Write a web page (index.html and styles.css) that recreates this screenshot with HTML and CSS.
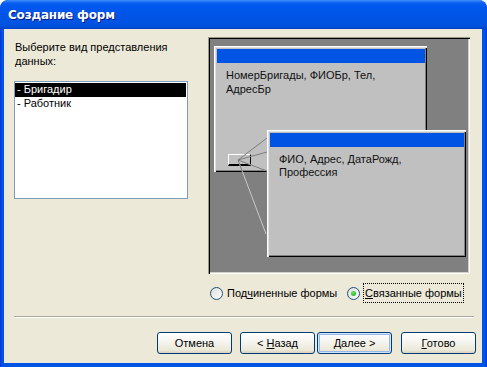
FILE: index.html
```html
<!DOCTYPE html>
<html lang="ru">
<head>
    <meta charset="UTF-8">
    <title>Создание форм</title>
    <link rel="stylesheet" href="styles.css">
</head>
<body>
    <div class="window">
        <div class="titlebar">
            <span class="title">Создание форм</span>
        </div>
        <div class="client">
            <div class="main">
                <div class="left">
                    <p class="prompt">Выберите вид представления<br>данных:</p>
                    <ul class="list">
                        <li class="selected">- Бригадир</li>
                        <li>- Работник</li>
                    </ul>
                </div>
                <div class="right">
                    <div class="preview">
                        <div class="form form-main">
                            <div class="caption"></div>
                            <p class="fields">НомерБригады, ФИОБр, Тел,<br>АдресБр</p>
                            <span class="subbtn"></span>
                        </div>
                        <svg class="links" width="262" height="237" viewBox="0 0 262 237">
                            <defs>
                                <clipPath id="inMain"><rect x="6" y="9" width="213" height="126"/></clipPath>
                            </defs>
                            <g stroke="#c8c8c8" stroke-width="1">
                                <line x1="30" y1="123" x2="59" y2="101"/>
                                <line x1="30" y1="123" x2="59" y2="115"/>
                                <line x1="30" y1="123" x2="59" y2="134"/>
                                <line x1="30" y1="123" x2="58" y2="197"/>
                            </g>
                            <g stroke="#7c7c7c" stroke-width="1" clip-path="url(#inMain)">
                                <line x1="30" y1="123" x2="59" y2="101"/>
                                <line x1="30" y1="123" x2="59" y2="115"/>
                                <line x1="30" y1="123" x2="59" y2="134"/>
                                <line x1="30" y1="123" x2="58" y2="197"/>
                            </g>
                        </svg>
                        <div class="form form-sub">
                            <div class="caption"></div>
                            <p class="fields">ФИО, Адрес, ДатаРожд,<br>Профессия</p>
                        </div>
                    </div>
                    <div class="options">
                        <label class="radio first"><span class="dot"></span>Под<u>ч</u>иненные формы</label>
                        <label class="radio checked"><span class="dot"></span><span class="focus"><u>С</u>вязанные формы</span></label>
                    </div>
                </div>
            </div>
            <div class="separator"></div>
            <div class="buttons">
                <button class="btn">Отмена</button>
                <button class="btn back">&lt; <u>Н</u>азад</button>
                <button class="btn default"><u>Д</u>алее &gt;</button>
                <button class="btn"><u>Г</u>отово</button>
            </div>
        </div>
    </div>
</body>
</html>
```

FILE: styles.css
```css
html, body {
    margin: 0;
    padding: 0;
    background: #ffffff;
}

body {
    font-family: "Liberation Sans", Arial, sans-serif;
    font-size: 11px;
    color: #000;
}

.window {
    width: 487px;
    height: 367px;
    box-sizing: border-box;
    display: flex;
    flex-direction: column;
    border-radius: 8px 8px 0 0;
    background: linear-gradient(to right, #0831d9 0, #0054e3 2px, #0054e3 calc(100% - 2px), #0831d9 100%);
    padding: 0 5px 4px 4px;
    overflow: hidden;
}

.titlebar {
    height: 29px;
    margin: 0 -5px 0 -4px;
    padding-left: 8px;
    display: flex;
    align-items: center;
    border-radius: 8px 8px 0 0;
    background: linear-gradient(#3d8dfa 0, #0a5ff0 3px, #0058ee 6px, #0055e8 14px, #0054e3 22px, #0250da 27px, #003dbf 29px);
}

.title {
    color: #fff;
    font-family: "DejaVu Sans", sans-serif;
    font-weight: bold;
    font-size: 12px;
    letter-spacing: -0.2px;
    text-shadow: 1px 1px 0 #0a1883;
    margin-top: 1px;
}

.client {
    flex: 1;
    background: #ece9d8;
    padding: 8px 8px 0 10px;
    display: flex;
    flex-direction: column;
}

.main {
    display: flex;
    gap: 20px;
}

.left {
    width: 174px;
}

.prompt {
    margin: 3px 0 0 1px;
    line-height: 14px;
}

.list {
    list-style: none;
    margin: 13px 0 0 0;
    padding: 1px 1px 1px 0;
    height: 114px;
    border: 1px solid #7f9db9;
    background: #fff;
}

.list li {
    height: 14px;
    line-height: 13px;
    padding-left: 2px;
}

.list li.selected {
    background: #000;
    color: #fff;
}

.right {
    width: 262px;
}

.preview {
    position: relative;
    height: 237px;
    background: #808080;
    box-shadow: inset 1px 1px 0 #9d9a8c, inset 2px 2px 0 #000, inset -1px -1px 0 #fff, inset -2px -2px 0 #d4d0c8;
}

.form {
    position: absolute;
    box-sizing: border-box;
    background: #c0c0c0;
    padding: 3px 2px 0 3px;
    box-shadow: inset 1px 1px 0 #fff, inset 2px 2px 0 #dfdfdf, inset -1px -1px 0 #000, inset -2px -2px 0 #808080;
}

.form-main {
    left: 6px;
    top: 9px;
    width: 213px;
    height: 126px;
}

.form-sub {
    left: 59px;
    top: 93px;
    width: 199px;
    height: 127px;
}

.caption {
    height: 14px;
    background: #0054e3;
}

.fields {
    margin: 5px 0 0 9px;
    line-height: 14px;
    color: #111;
}

.form-sub .fields {
    margin-top: 6px;
    line-height: 13px;
}

.subbtn {
    position: absolute;
    left: 14px;
    top: 108px;
    width: 23px;
    height: 12px;
    box-sizing: border-box;
    border-top: 1px solid #fff;
    border-left: 1px solid #fff;
    border-right: 1px solid #000;
    border-bottom: 2px solid #000;
}

.links {
    position: absolute;
    left: 0;
    top: 0;
}

.options {
    display: flex;
    align-items: center;
    height: 20px;
    margin-top: 9px;
    padding-left: 2px;
}

.radio {
    display: flex;
    align-items: center;
    white-space: nowrap;
}

.radio.first {
    width: 137px;
}

.dot {
    width: 11px;
    height: 11px;
    border: 1px solid #1c5180;
    border-radius: 50%;
    background: linear-gradient(135deg, #dcdcd7, #fff);
    margin-right: 4px;
    position: relative;
}

.checked .dot::after {
    content: "";
    position: absolute;
    left: 3px;
    top: 3px;
    width: 5px;
    height: 5px;
    border-radius: 50%;
    background: radial-gradient(circle at 40% 35%, #5ee65e, #21a121);
}

.focus {
    outline: 1px dotted #000;
    padding: 3px 1px 3px 1px;
}

.separator {
    height: 1px;
    margin-top: 13px;
    background: #aca899;
    box-shadow: 0 1px 0 #fff;
}

.buttons {
    display: flex;
    justify-content: flex-end;
    margin-top: 15px;
    margin-right: -2px;
}

.btn {
    width: 75px;
    height: 22px;
    padding: 0;
    font-family: "Liberation Sans", Arial, sans-serif;
    font-size: 11px;
    color: #000;
    border: 1px solid #003c74;
    border-radius: 3px;
    background: linear-gradient(#ffffff 0, #f6f5f1 40%, #ece9d8 85%, #d6d0c5 100%);
    margin-left: 8px;
}

.btn.default {
    margin-left: 2px;
    box-shadow: inset 0 0 0 1px #cee7ff, inset 0 0 0 2px #98b8ea;
}

.btn.default + .btn {
    margin-left: 9px;
}

u {
    text-decoration: underline;
    text-underline-offset: 1px;
}
```
